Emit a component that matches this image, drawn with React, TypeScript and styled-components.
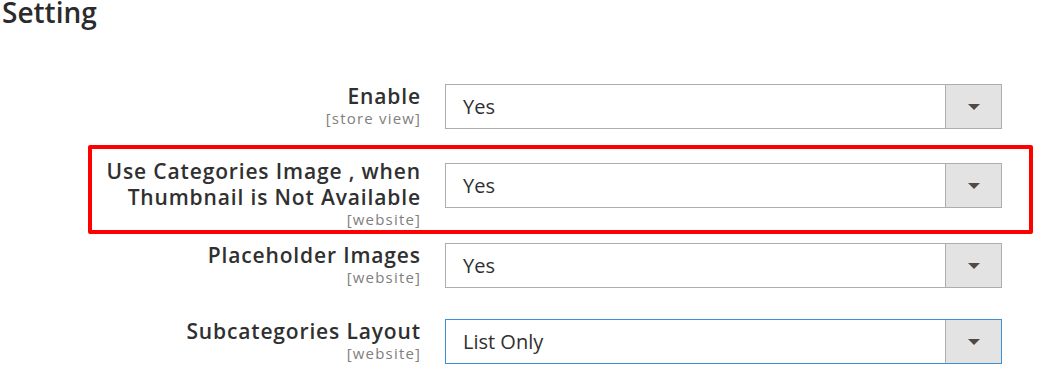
import React, { FC } from 'react'
import styled, { createGlobalStyle, css } from 'styled-components'

const GlobalStyle = createGlobalStyle`
  body {
    margin: 0;
    background: #ffffff;
    font-family: 'Open Sans', 'Noto Sans', sans-serif;
    color: #303030;
  }
`

const StyledPage = styled.div`
  width: 1037px;
  height: 366px;
  overflow: hidden;
  display: flex;
  flex-direction: column;
`

const StyledHeading = styled.h2`
  margin: 0;
  padding-left: 2px;
  font-size: 28px;
  line-height: 24px;
  font-weight: 600;
  color: #2b2b2b;
`

const StyledRow = styled.div<{ $gap: number; $highlighted?: boolean }>`
  position: relative;
  display: grid;
  grid-template-columns: 420px 557px;
  column-gap: 25px;
  align-items: start;
  margin-top: ${(p) => p.$gap}px;

  ${(p) =>
    p.$highlighted &&
    css`
      &::after {
        content: '';
        position: absolute;
        top: -18px;
        bottom: -6px;
        left: 88px;
        right: 4px;
        border: 4px solid #ff0000;
        border-radius: 2px;
        pointer-events: none;
      }
    `}
`

const StyledLabel = styled.div<{ $offset: number }>`
  display: flex;
  flex-direction: column;
  align-items: flex-end;
  text-align: right;
  margin-top: ${(p) => p.$offset}px;
`

const StyledLabelText = styled.span`
  font-size: 21px;
  line-height: 26px;
  font-weight: 600;
  letter-spacing: 0.85px;
  margin-right: -0.85px;
  color: #303030;
`

const StyledScope = styled.span`
  font-size: 15px;
  line-height: 18px;
  letter-spacing: 1.2px;
  margin-right: -1.2px;
  color: #808080;
`

const StyledSelect = styled.div<{ $focused?: boolean }>`
  display: flex;
  height: 45px;
  box-sizing: border-box;
  border: 1px solid ${(p) => (p.$focused ? '#3d8fd6' : '#adadad')};
  background: #ffffff;
`

const StyledValue = styled.span`
  flex: 1;
  display: flex;
  align-items: center;
  padding-left: 17px;
  font-size: 20px;
  color: #303030;
`

const StyledToggle = styled.span`
  width: 55px;
  display: flex;
  align-items: center;
  justify-content: center;
  border-left: 1px solid #adadad;
  background: #e3e3e3;

  &::before {
    content: '';
    border-left: 6px solid transparent;
    border-right: 6px solid transparent;
    border-top: 6px solid #514943;
  }
`

interface IField {
  label: string[]
  scope: string
  value: string
  gap: number
  offset?: number
  highlighted?: boolean
  focused?: boolean
}

const fields: IField[] = [
  { label: ['Enable'], scope: '[store view]', value: 'Yes', gap: 60 },
  {
    label: ['Use Categories Image , when', 'Thumbnail is Not Available'],
    scope: '[website]',
    value: 'Yes',
    gap: 34,
    offset: -5,
    highlighted: true,
  },
  { label: ['Placeholder Images'], scope: '[website]', value: 'Yes', gap: 15 },
  { label: ['Subcategories Layout'], scope: '[website]', value: 'List Only', gap: 31, focused: true },
]

const Field: FC<{ field: IField }> = ({ field }) => (
  <StyledRow $gap={field.gap} $highlighted={field.highlighted}>
    <StyledLabel $offset={field.offset ?? -1}>
      {field.label.map((line) => (
        <StyledLabelText key={line}>{line}</StyledLabelText>
      ))}
      <StyledScope>{field.scope}</StyledScope>
    </StyledLabel>

    <StyledSelect $focused={field.focused}>
      <StyledValue>{field.value}</StyledValue>
      <StyledToggle />
    </StyledSelect>
  </StyledRow>
)

const App: FC = () => (
  <>
    <GlobalStyle />
    <StyledPage>
      <StyledHeading>Setting</StyledHeading>
      {fields.map((field) => (
        <Field key={field.label[0]} field={field} />
      ))}
    </StyledPage>
  </>
)

export default App
